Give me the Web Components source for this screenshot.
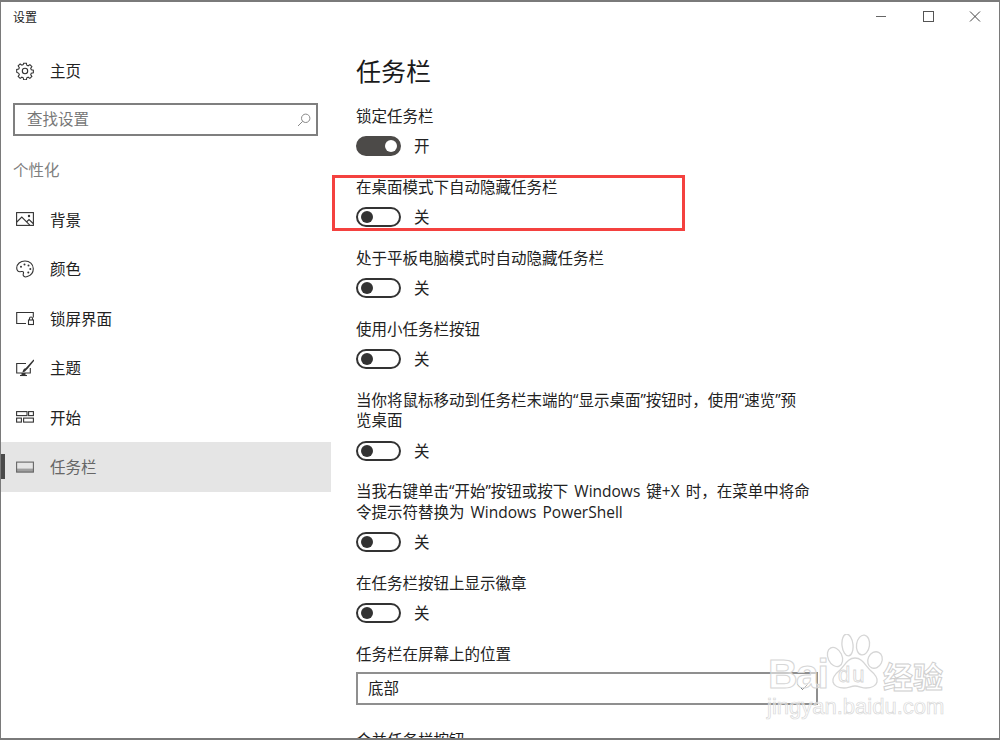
<!DOCTYPE html>
<html lang="zh"><head><meta charset="utf-8">
<style>
html,body{margin:0;padding:0;background:#fff}
body{font-family:"Open Sans","Noto Sans CJK SC",sans-serif;color:#1a1a1a;width:1000px;height:740px;overflow:hidden}
</style></head><body>
<settings-window>
  <nav-pane slot="nav">
    <nav-item icon="home" style="--h:41px;margin-top:17px">主页</nav-item>
    <search-box></search-box>
    <nav-heading>个性化</nav-heading>
    <nav-item icon="image">背景</nav-item>
    <nav-item icon="palette">颜色</nav-item>
    <nav-item icon="lock">锁屏界面</nav-item>
    <nav-item icon="theme">主题</nav-item>
    <nav-item icon="start">开始</nav-item>
    <nav-item icon="taskbar" selected>任务栏</nav-item>
  </nav-pane>
  <h-title slot="main">任务栏</h-title>
  <toggle-row slot="main" on label="锁定任务栏"></toggle-row>
  <toggle-row slot="main" label="在桌面模式下自动隐藏任务栏"></toggle-row>
  <toggle-row slot="main" label="处于平板电脑模式时自动隐藏任务栏"></toggle-row>
  <toggle-row slot="main" label="使用小任务栏按钮"></toggle-row>
  <toggle-row slot="main" label="当你将鼠标移动到任务栏末端的“显示桌面”按钮时，使用“速览”预览桌面"></toggle-row>
  <toggle-row slot="main" label="当我右键单击“开始”按钮或按下 Windows 键+X 时，在菜单中将命令提示符替换为 Windows PowerShell"></toggle-row>
  <toggle-row slot="main" label="在任务栏按钮上显示徽章"></toggle-row>
  <select-row slot="main" label="任务栏在屏幕上的位置" value="底部"></select-row>
  <div slot="main" style="font-size:15.5px;line-height:21px;margin-top:25px;white-space:nowrap">合并任务栏按钮</div>
</settings-window>
<script>
const ICONS={
home:'<g fill="none" stroke="currentColor" stroke-width="1.1"><circle cx="9" cy="9" r="2.7"/><path d="M7.6 1.2h2.8l.4 2.1 1.4.6 1.8-1.2 2 2-1.2 1.8.6 1.4 2.1.4v2.8l-2.1.4-.6 1.4 1.2 1.8-2 2-1.8-1.2-1.4.6-.4 2.1H7.6l-.4-2.1-1.4-.6-1.8 1.2-2-2 1.2-1.8-.6-1.4L.5 10.4V7.6l2.1-.4.6-1.4L2 4l2-2 1.8 1.2 1.4-.6z" transform="translate(.2 0) scale(.98)"/></g>',
image:'<g fill="none" stroke="currentColor" stroke-width="1.1"><rect x=".6" y="2.6" width="16.8" height="12.8"/><path d="M.8 12l5-5 8 8.2M10.5 12l2.5-2.5 4.2 4"/></g><circle cx="13" cy="6" r="1.2" fill="currentColor"/>',
palette:'<path fill="none" stroke="currentColor" stroke-width="1.1" d="M9 1C4.4 1 .7 4 .7 8c0 2.4 1.5 3.8 3.4 3.7 1.8-.1 2.8-.6 3.3.4.6 1.2-.7 2-.1 3.4.5 1.2 2.2 1.7 4 1.1 3.5-1.2 6-4.3 6-7.900C17.3 4.3 13.6 1 9 1z"/><g fill="currentColor"><circle cx="5" cy="6.8" r="1"/><circle cx="8.5" cy="4.5" r="1"/><circle cx="12.5" cy="5.5" r="1"/><circle cx="14.3" cy="9" r="1"/><circle cx="12.3" cy="12.5" r="1"/></g>',
lock:'<g fill="none" stroke="currentColor" stroke-width="1.1"><path d="M10 14.500H.7V3.500h16.600v5"/><rect x="12.500" y="11" width="5" height="4.500"/><path d="M13.500 11V9.500a1.500 1.500 0 0 1 3 0V11"/></g>',
theme:'<g fill="none" stroke="currentColor" stroke-width="1.1"><path d="M10 4.500H.7v9.500h13.600V9"/><path d="M4 16.500h7"/></g><path fill="currentColor" d="M17.500.5l.9.900-6.500 8.200-2 1.900c-.6 1-1.800 1.700-3.600 1.700.7-.8.700-2 1.400-3 .5-.7 1.200-.9 1.900-.9zM5.500 14h4v3h-4z"/>',
start:'<g fill="none" stroke="currentColor" stroke-width="1.1"><rect x=".6" y="3.600" width="10.400" height="4"/><rect x="12.600" y="3.600" width="4.800" height="4"/><rect x=".6" y="10.100" width="4.800" height="4"/><rect x="7.600" y="10.100" width="9.800" height="4"/></g>',
taskbar:'<rect x=".6" y="4.100" width="16.800" height="10" fill="none" stroke="currentColor" stroke-width="1.100"/><rect x=".6" y="10.600" width="16.800" height="3.500" fill="currentColor" opacity=".55"/>'
};
function def(name,css,html,init){
  customElements.define(name,class extends HTMLElement{
    constructor(){super();this.attachShadow({mode:'open'}).innerHTML='<style>'+css+'</style>'+html}
    connectedCallback(){init&&init.call(this,this.shadowRoot)}
  });
}
def('settings-window',`
:host{display:block;width:1000px;height:740px;box-sizing:border-box;border:solid #7a7a7a;border-width:2px 1px 2px 1px;position:relative;background:#fff;overflow:hidden}
.bar{display:flex;align-items:center;height:31px;padding-left:12px;font-size:12px;color:#222}
.t{padding-bottom:2px}
.wc{margin-left:auto;display:flex}
.wc svg{display:block;width:47px;height:31px}
.body{display:flex;height:705px;overflow:hidden}
.nav{width:330px;flex:none}
.main{padding-left:25px;width:470px;flex:none}
.red{position:absolute;left:331px;top:173px;width:347px;height:50px;border:3px solid #f4413f}
.mark{position:absolute;left:766px;top:632px;width:220px;height:90px;pointer-events:none}
.mark svg{position:absolute;left:0;top:0}
.b{position:absolute;left:1px;top:15px;font:700 41px/50px "Liberation Sans",sans-serif;color:rgba(255,255,255,.55);-webkit-text-stroke:1px #d6d6d6;letter-spacing:-1.500px}
.du{position:absolute;left:71px;top:29px;font:400 22px/24px "Liberation Sans",sans-serif;color:rgba(255,255,255,.5);-webkit-text-stroke:.8px #d6d6d6;letter-spacing:2px}
.jy{position:absolute;left:116px;top:24px;font:700 30px/34px "Noto Sans CJK SC",sans-serif;color:rgba(255,255,255,.55);-webkit-text-stroke:1px #cfcfcf;white-space:nowrap}
.url{position:absolute;left:0;top:60px;font:400 22px/26px "Liberation Sans",sans-serif;color:rgba(255,255,255,.5);-webkit-text-stroke:.7px #d8d8d8;white-space:nowrap}
`,`
<div class="bar"><span class="t">设置</span><div class="wc">
<svg viewBox="0 0 47 31"><path d="M18 14.500h10" stroke="#666" fill="none"/></svg>
<svg viewBox="0 0 47 31"><rect x="18.500" y="9.500" width="10" height="10" stroke="#555" fill="none"/></svg>
<svg viewBox="0 0 47 31"><path d="M18 9.500l10 10M28 9.500l-10 10" stroke="#444" fill="none"/></svg>
</div></div>
<div class="body"><div class="nav"><slot name="nav"></slot></div><div class="main"><slot name="main"></slot></div></div>
<div class="red"></div>
<div class="mark">
<svg width="220" height="90" viewBox="0 0 220 90" fill="rgba(255,255,255,.5)" stroke="#d6d6d6" stroke-width="1.300">
<ellipse cx="80.500" cy="11" rx="5.500" ry="11" transform="rotate(-6 80.500 11)"/><ellipse cx="96" cy="11" rx="6.500" ry="10" transform="rotate(8 96 11)"/>
<ellipse cx="68" cy="23" rx="7" ry="10" transform="rotate(-25 68 23)"/><ellipse cx="108" cy="26" rx="7" ry="8.500" transform="rotate(25 108 26)"/>
<path d="M88 24c7 0 10 7 15 12 6 5 8 9 7 12-1 4-6 6-11 6-4 0-7-2-11-2s-7 2-11 2c-5 0-10-2-11-6-1-3 1-7 7-12 5-5 8-12 15-12z"/></svg>
<span class="b">Bai</span><span class="du">du</span><span class="jy">经验</span><span class="url">jingyan.baidu.com</span>
</div>`);
def('nav-pane',':host{display:block}','<slot></slot>');
def('nav-item',`
:host{display:flex;align-items:center;height:var(--h,49.500px);padding-left:15px;font-size:15.500px;color:#222;position:relative}
svg{width:18px;height:18px;margin-right:16px;flex:none;color:#333}
:host([selected]){background:#e5e5e5;color:#666}
:host([selected]) svg{color:#666}
:host([selected])::before{content:"";position:absolute;left:0;top:12px;width:4px;height:25px;background:#4a4a4a}
`,'<svg viewBox="0 0 18 18"></svg><slot></slot>',function(r){r.querySelector('svg').innerHTML=ICONS[this.getAttribute('icon')]});
def('search-box',`
:host{display:flex;align-items:center;box-sizing:border-box;height:33px;width:305px;margin:12px 0 0 12px;border:2px solid #7f7f7f;padding:0 5px 0 12px;font-size:15.500px;color:#777}
span{padding-bottom:2px}
svg{margin-left:auto;width:14px;height:14px;color:#888}
`,'<span>查找设置</span><svg viewBox="0 0 14 14"><circle cx="8.700" cy="5.300" r="4.200" fill="none" stroke="currentColor"/><path d="M5.700 8.300L1 13" stroke="currentColor" fill="none"/></svg>');
def('nav-heading',`:host{display:block;margin:22px 0 0 12px;font-size:15.500px;line-height:24px;height:36.500px;color:#808080}`,'<slot></slot>');
def('h-title',`:host{display:block;font-size:25px;line-height:36px;margin-top:20px;height:49px;color:#1a1a1a}`,'<slot></slot>');
def('toggle-row',`
:host{display:block;padding-top:3px;margin-bottom:16px;font-size:15.500px;color:#222}
.l{line-height:20.500px;width:455px;padding-top:.5px;margin-bottom:10px;word-spacing:2px}
.r{display:flex;align-items:flex-start;height:21px;gap:13px}
.t{box-sizing:border-box;width:45px;height:20px;border:2px solid #333;border-radius:10px;position:relative;flex:none}
.t::after{content:"";position:absolute;left:2.500px;top:2px;width:12px;height:12px;border-radius:50%;background:#333}
:host([on]) .t{background:#4c4a48;border-color:#4c4a48}
:host([on]) .t::after{left:auto;right:2.500px;background:#fff}
.s{line-height:20px}
`,'<div class="l"></div><div class="r"><div class="t"></div><span class="s"></span></div>',function(r){
  r.querySelector('.l').textContent=this.getAttribute('label');
  r.querySelector('.s').textContent=this.hasAttribute('on')?'开':'关';
});
def('select-row',`
:host{display:block;padding-top:4px;font-size:15.500px;color:#222}
.l{line-height:20.500px;margin-bottom:7px}
.s{box-sizing:border-box;width:462px;height:33px;border:2px solid #8f8f8f;display:flex;align-items:center;padding:0 0 0 10px;position:relative}
.s span{padding-bottom:2px}
svg{position:absolute;right:8px;top:10px;width:11px;height:7px}
`,'<div class="l"></div><div class="s"><span></span><svg viewBox="0 0 11 7"><path d="M.5.500l5 5 5-5" stroke="#666" fill="none"/></svg></div>',function(r){
  r.querySelector('.l').textContent=this.getAttribute('label');
  r.querySelector('span').textContent=this.getAttribute('value');
});
</script>
</body></html>
